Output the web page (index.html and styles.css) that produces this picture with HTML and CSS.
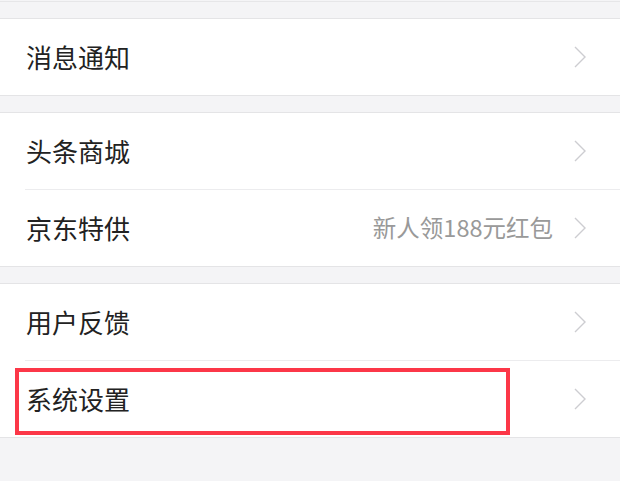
FILE: index.html
```html
<!DOCTYPE html>
<html lang="zh-CN">
<head>
<meta charset="utf-8">
<link rel="stylesheet" href="styles.css">
</head>
<body>
<div class="topline"></div>
<div class="section first">
  <div class="row"><span class="label">消息通知</span><span class="right"><svg class="chev" viewBox="0 0 12 22"><path d="M1 1 L11 11 L1 21"/></svg></span></div>
</div>
<div class="section">
  <div class="row"><span class="label">头条商城</span><span class="right"><svg class="chev" viewBox="0 0 12 22"><path d="M1 1 L11 11 L1 21"/></svg></span></div>
  <div class="row"><span class="label">京东特供</span><span class="right"><span class="hint">新人领188元红包</span><svg class="chev" viewBox="0 0 12 22"><path d="M1 1 L11 11 L1 21"/></svg></span></div>
</div>
<div class="section">
  <div class="row"><span class="label">用户反馈</span><span class="right"><svg class="chev" viewBox="0 0 12 22"><path d="M1 1 L11 11 L1 21"/></svg></span></div>
  <div class="row highlighted"><span class="label">系统设置</span><span class="right"><svg class="chev" viewBox="0 0 12 22"><path d="M1 1 L11 11 L1 21"/></svg></span><div class="mark"></div></div>
</div>
</body>
</html>
```
FILE: styles.css
```css
html, body {
  margin: 0;
  padding: 0;
  background: #f4f4f6;
  font-family: "Noto Sans CJK SC", "Noto Sans", sans-serif;
}
.topline {
  margin-top: 1px;
  height: 1px;
  background: #e6e6e8;
}
.section {
  background: #fff;
  border-top: 1px solid #e4e4e6;
  border-bottom: 1px solid #e4e4e6;
  margin-top: 16px;
}
.section.first {
  margin-top: 16px;
}
.row {
  position: relative;
  height: 76px;
  display: flex;
  align-items: center;
  justify-content: space-between;
  padding: 0 34px 0 26px;
}
.row + .row::before {
  content: "";
  position: absolute;
  left: 25px;
  right: 0;
  top: -1px;
  height: 1px;
  background: #ececee;
}
.row + .row {
  margin-top: 1px;
}
.label {
  font-size: 26px;
  color: #222;
  line-height: 1;
}
.right {
  display: flex;
  align-items: center;
  gap: 21px;
}
.hint {
  font-size: 23.5px;
  color: #999;
  line-height: 1;
}
.chev {
  width: 12px;
  height: 22px;
  display: block;
}
.chev path {
  fill: none;
  stroke: #cdcdd1;
  stroke-width: 1.4;
}
.mark {
  position: absolute;
  left: 15px;
  top: 7px;
  width: 487px;
  height: 59px;
  border: 4px solid #fc3748;
}
```
